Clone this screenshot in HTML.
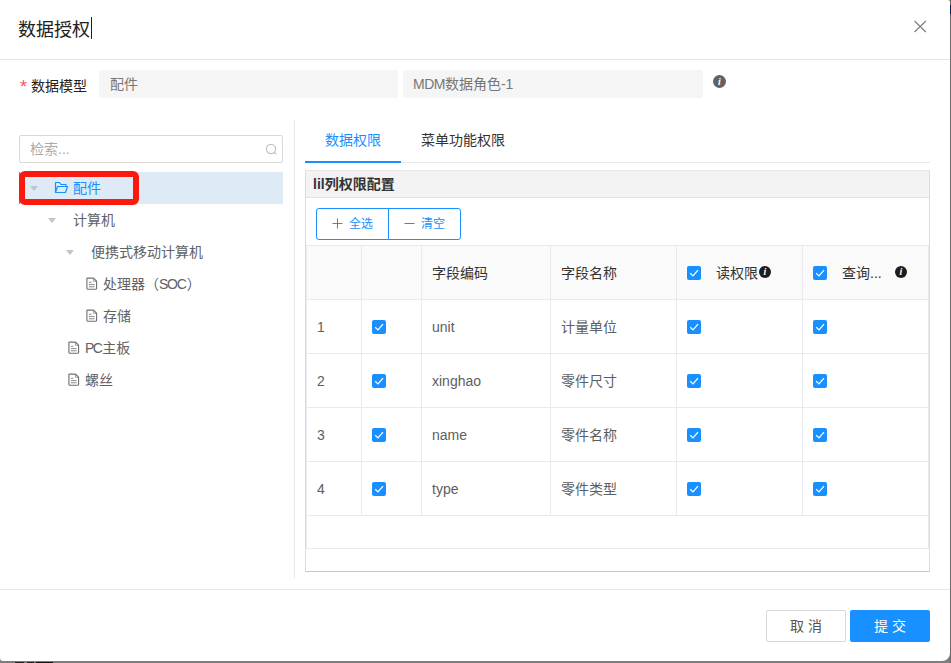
<!DOCTYPE html>
<html lang="zh-CN">
<head>
<meta charset="utf-8">
<title>数据授权</title>
<style>
*{box-sizing:border-box;margin:0;padding:0}
html,body{width:951px;height:663px;overflow:hidden}
body{background:#7d7d7d;font-family:"Liberation Sans","Noto Sans CJK SC",sans-serif;font-size:14px;color:#555;position:relative}
.abs{position:absolute}
.modal{position:absolute;left:0;top:0;width:950px;height:661px;background:#fff;border-radius:0 2px 8px 3px;overflow:hidden}
.edge-r{position:absolute;left:950px;top:0;width:1px;height:663px;background:#6a6a6a}
.edge-r i{position:absolute;left:0;top:5px;width:1px;height:9px;background:#00205f}
.title{left:18px;top:17px;font-size:18px;line-height:26px;color:#222}
.caret{left:91px;top:17px;width:1px;height:22px;background:#222}
.hline{left:0;top:59px;width:950px;height:1px;background:#e6e6e6}
.close{left:912px;top:19px;width:16px;height:16px}
.lbl{left:19px;top:75px;line-height:22px;color:#222;font-size:14px;white-space:nowrap}
.lbl b{color:#f5222d;font-weight:400;font-family:"Liberation Sans",sans-serif;font-size:18px;line-height:22px;vertical-align:-2px;margin-left:1px;margin-right:4px;color:#f5575a}
.inp{top:70px;height:28px;background:#f5f5f5;border-radius:2px;line-height:28px;padding-left:11px;color:#777;font-size:14px;white-space:nowrap}
.info{width:12px;height:12px;border-radius:50%;background:#1c1c1c;color:#fff;font:italic bold 10px/12px "Liberation Serif",serif;text-align:center}
.search{left:19px;top:135px;width:264px;height:28px;border:1px solid #d9d9d9;border-radius:2px;line-height:27px;padding-left:10px;color:#aaa;font-size:14px}
.sel{left:19px;top:172px;width:264px;height:32px;background:#deeaf6;border-left:1px solid #3a8ee6}
.red{left:19px;top:171px;width:120px;height:34px;border:6px solid #fb1a0e;border-radius:6px}
.tn{line-height:32px;height:32px;font-size:14px;color:#606266;white-space:nowrap}
.tri{width:0;height:0;border-left:4px solid transparent;border-right:4px solid transparent;border-top:5px solid #c0c4cc}
.vline{left:294px;top:120px;width:1px;height:459px;background:#e6e8ee}
.tab{top:129px;line-height:22px;font-size:14px;color:#333;white-space:nowrap}
.tabline{left:305px;top:162px;width:625px;height:1px;background:#e8e8f0}
.tabink{left:305px;top:161px;width:96px;height:2px;background:#1890ff}
.panel{left:305px;top:170px;width:625px;height:402px;border:1px solid #dcdcdc;border-top-color:#e6e6e6;border-bottom-color:#c6c6c6;background:#fff}
.phead{left:306px;top:171px;width:623px;height:27px;background:#f3f3f3;border-bottom:1px solid #e4e4e4}
.ptitle{left:313px;top:173px;line-height:22px;font-weight:700;color:#333;font-size:14px;white-space:nowrap}
.bi{display:inline-block;vertical-align:-1px;margin-right:6px}
.btn{top:208px;height:32px;border:1px solid #1890ff;color:#1890ff;line-height:30px;font-size:12px;text-align:center;background:#fff;white-space:nowrap}
.thead{left:306px;top:245px;width:623px;height:54px;background:#fafafa}
.hl{left:306px;width:623px;height:1px;background:#e8eaf0}
.vl{top:245px;width:1px;height:270px;background:#e8eaf0}
.cell{line-height:22px;font-size:14px;color:#5c5e62;white-space:nowrap}
.cb{width:14px;height:14px;border-radius:2px;background:#1890ff}
.cb svg{display:block}
.fline{left:0;top:589px;width:950px;height:1px;background:#e6e8f0}
.fbtn{top:610px;height:32px;line-height:30px;text-align:center;font-size:14px;border-radius:2px;white-space:nowrap}
</style>
</head>
<body>
<div class="modal">
  <div class="abs title">数据授权</div>
  <div class="abs caret"></div>
  <svg class="abs close" viewBox="0 0 16 16"><path d="M2.5 2 L13.9 13 M13.9 2 L2.5 13" stroke="#80808a" stroke-width="1.25" fill="none"/></svg>
  <div class="abs hline"></div>

  <div class="abs lbl"><b>*</b>数据模型</div>
  <div class="abs inp" style="left:99px;width:299px">配件</div>
  <div class="abs inp" style="left:403px;width:300px;padding-left:10px"><span style="letter-spacing:-.5px">MDM</span>数据角色-1</div>
  <div class="abs info" style="left:713px;top:75px;width:13px;height:13px;line-height:13px;background:#606266">i</div>

  <div class="abs search">检索...</div>
  <svg class="abs" style="left:265px;top:143px" width="13" height="13" viewBox="0 0 13 13"><circle cx="6" cy="6" r="4.6" stroke="#bfc3cc" stroke-width="1.3" fill="none"/><path d="M9.3 9.3 L11.3 11.3" stroke="#bfc3cc" stroke-width="1.3"/></svg>

  <div class="abs sel"></div>
  <div class="abs red"></div>
  <div class="abs tri" style="left:30px;top:186px"></div>
  <svg class="abs" style="left:54px;top:181px" width="15" height="13" viewBox="0 0 15 13"><path d="M1.5 11.5 V1.5 H5.5 L7 3.5 H12 V5.5 M1.5 11.5 L3.5 5.5 H13.5 L11.5 11.5 Z" stroke="#1890ff" stroke-width="1.2" fill="none" stroke-linejoin="round"/></svg>
  <div class="abs tn" style="left:73px;top:172px;color:#1890ff">配件</div>

  <div class="abs tri" style="left:48px;top:218px"></div>
  <div class="abs tn" style="left:73px;top:204px">计算机</div>

  <div class="abs tri" style="left:66px;top:250px"></div>
  <div class="abs tn" style="left:91px;top:236px">便携式移动计算机</div>

  <svg class="abs doc" style="left:86px;top:277px" width="12" height="14" viewBox="0 0 12 14"><path d="M1.5 1.1 H7.4 L10.6 4.3 V11.6 Q10.6 12.2 10 12.2 H1.5 Q.9 12.2 .9 11.6 V1.7 Q.9 1.1 1.5 1.1 Z" stroke="#6b6d72" stroke-width="1.1" fill="none"/><path d="M7.4 1.3 V4.3 H10.4" stroke="#8a8c90" stroke-width=".8" fill="none"/><path d="M2.9 5.3 H5.4 M2.9 7.6 H8.6 M2.9 9.8 H8.6" stroke="#7a7c80" stroke-width=".9" fill="none"/></svg>
  <div class="abs tn" style="left:103px;top:268px">处理器（<span style="letter-spacing:-1.3px;margin-right:1.3px">SOC</span>）</div>

  <svg class="abs doc" style="left:86px;top:309px" width="12" height="14" viewBox="0 0 12 14"><path d="M1.5 1.1 H7.4 L10.6 4.3 V11.6 Q10.6 12.2 10 12.2 H1.5 Q.9 12.2 .9 11.6 V1.7 Q.9 1.1 1.5 1.1 Z" stroke="#6b6d72" stroke-width="1.1" fill="none"/><path d="M7.4 1.3 V4.3 H10.4" stroke="#8a8c90" stroke-width=".8" fill="none"/><path d="M2.9 5.3 H5.4 M2.9 7.6 H8.6 M2.9 9.8 H8.6" stroke="#7a7c80" stroke-width=".9" fill="none"/></svg>
  <div class="abs tn" style="left:103px;top:300px">存储</div>

  <svg class="abs doc" style="left:68px;top:341px" width="12" height="14" viewBox="0 0 12 14"><path d="M1.5 1.1 H7.4 L10.6 4.3 V11.6 Q10.6 12.2 10 12.2 H1.5 Q.9 12.2 .9 11.6 V1.7 Q.9 1.1 1.5 1.1 Z" stroke="#6b6d72" stroke-width="1.1" fill="none"/><path d="M7.4 1.3 V4.3 H10.4" stroke="#8a8c90" stroke-width=".8" fill="none"/><path d="M2.9 5.3 H5.4 M2.9 7.6 H8.6 M2.9 9.8 H8.6" stroke="#7a7c80" stroke-width=".9" fill="none"/></svg>
  <div class="abs tn" style="left:85px;top:332px"><span style="letter-spacing:-1.7px;margin-right:1.2px">PC</span>主板</div>

  <svg class="abs doc" style="left:68px;top:373px" width="12" height="14" viewBox="0 0 12 14"><path d="M1.5 1.1 H7.4 L10.6 4.3 V11.6 Q10.6 12.2 10 12.2 H1.5 Q.9 12.2 .9 11.6 V1.7 Q.9 1.1 1.5 1.1 Z" stroke="#6b6d72" stroke-width="1.1" fill="none"/><path d="M7.4 1.3 V4.3 H10.4" stroke="#8a8c90" stroke-width=".8" fill="none"/><path d="M2.9 5.3 H5.4 M2.9 7.6 H8.6 M2.9 9.8 H8.6" stroke="#7a7c80" stroke-width=".9" fill="none"/></svg>
  <div class="abs tn" style="left:85px;top:364px">螺丝</div>

  <div class="abs vline"></div>

  <div class="abs tab" style="left:325px;color:#1890ff">数据权限</div>
  <div class="abs tab" style="left:421px">菜单功能权限</div>
  <div class="abs tabline"></div>
  <div class="abs tabink"></div>

  <div class="abs panel"></div>
  <div class="abs phead"></div>
  <div class="abs ptitle">lil列权限配置</div>

  <div class="abs btn" style="left:316px;width:73px;border-radius:3px 0 0 3px"><svg class="bi" width="11" height="11" viewBox="0 0 11 11"><path d="M5.5 .5 V10.5 M.5 5.5 H10.5" stroke="#1890ff" stroke-width="1" fill="none"/></svg>全选</div>
  <div class="abs btn" style="left:388px;width:73px;border-radius:0 3px 3px 0"><svg class="bi" width="11" height="11" viewBox="0 0 11 11"><path d="M.5 5.5 H10.5" stroke="#1890ff" stroke-width="1" fill="none"/></svg>清空</div>

  <div class="abs thead"></div>
  <div class="abs hl" style="top:245px"></div>
  <div class="abs hl" style="top:299px"></div>
  <div class="abs hl" style="top:353px"></div>
  <div class="abs hl" style="top:407px"></div>
  <div class="abs hl" style="top:461px"></div>
  <div class="abs hl" style="top:515px"></div>
  <div class="abs hl" style="top:548px"></div>
  <div class="abs vl" style="left:306px;height:303px"></div>
  <div class="abs vl" style="left:928px;height:303px"></div>
  <div class="abs vl" style="left:361px"></div>
  <div class="abs vl" style="left:421px"></div>
  <div class="abs vl" style="left:550px"></div>
  <div class="abs vl" style="left:676px"></div>
  <div class="abs vl" style="left:802px"></div>

  <div class="abs cell" style="left:432px;top:262px;color:#333">字段编码</div>
  <div class="abs cell" style="left:561px;top:262px;color:#333">字段名称</div>
  <div class="abs cb" style="left:687px;top:266px"><svg width="14" height="14" viewBox="0 0 14 14"><path d="M3.2 7.2 L6 9.9 L11 4.1" stroke="#fff" stroke-width="1.25" fill="none"/></svg></div>
  <div class="abs cell" style="left:716px;top:262px;color:#333">读权限</div>
  <div class="abs info" style="left:759px;top:266px">i</div>
  <div class="abs cb" style="left:813px;top:266px"><svg width="14" height="14" viewBox="0 0 14 14"><path d="M3.2 7.2 L6 9.9 L11 4.1" stroke="#fff" stroke-width="1.25" fill="none"/></svg></div>
  <div class="abs cell" style="left:842px;top:262px;color:#333">查询...</div>
  <div class="abs info" style="left:895px;top:266px">i</div>

  <!-- rows -->
  <div class="abs cell" style="left:317px;top:316px">1</div>
  <div class="abs cb" style="left:372px;top:320px"><svg width="14" height="14" viewBox="0 0 14 14"><path d="M3.2 7.2 L6 9.9 L11 4.1" stroke="#fff" stroke-width="1.25" fill="none"/></svg></div>
  <div class="abs cell" style="left:432px;top:316px">unit</div>
  <div class="abs cell" style="left:561px;top:316px">计量单位</div>
  <div class="abs cb" style="left:687px;top:320px"><svg width="14" height="14" viewBox="0 0 14 14"><path d="M3.2 7.2 L6 9.9 L11 4.1" stroke="#fff" stroke-width="1.25" fill="none"/></svg></div>
  <div class="abs cb" style="left:813px;top:320px"><svg width="14" height="14" viewBox="0 0 14 14"><path d="M3.2 7.2 L6 9.9 L11 4.1" stroke="#fff" stroke-width="1.25" fill="none"/></svg></div>

  <div class="abs cell" style="left:317px;top:370px">2</div>
  <div class="abs cb" style="left:372px;top:374px"><svg width="14" height="14" viewBox="0 0 14 14"><path d="M3.2 7.2 L6 9.9 L11 4.1" stroke="#fff" stroke-width="1.25" fill="none"/></svg></div>
  <div class="abs cell" style="left:432px;top:370px">xinghao</div>
  <div class="abs cell" style="left:561px;top:370px">零件尺寸</div>
  <div class="abs cb" style="left:687px;top:374px"><svg width="14" height="14" viewBox="0 0 14 14"><path d="M3.2 7.2 L6 9.9 L11 4.1" stroke="#fff" stroke-width="1.25" fill="none"/></svg></div>
  <div class="abs cb" style="left:813px;top:374px"><svg width="14" height="14" viewBox="0 0 14 14"><path d="M3.2 7.2 L6 9.9 L11 4.1" stroke="#fff" stroke-width="1.25" fill="none"/></svg></div>

  <div class="abs cell" style="left:317px;top:424px">3</div>
  <div class="abs cb" style="left:372px;top:428px"><svg width="14" height="14" viewBox="0 0 14 14"><path d="M3.2 7.2 L6 9.9 L11 4.1" stroke="#fff" stroke-width="1.25" fill="none"/></svg></div>
  <div class="abs cell" style="left:432px;top:424px">name</div>
  <div class="abs cell" style="left:561px;top:424px">零件名称</div>
  <div class="abs cb" style="left:687px;top:428px"><svg width="14" height="14" viewBox="0 0 14 14"><path d="M3.2 7.2 L6 9.9 L11 4.1" stroke="#fff" stroke-width="1.25" fill="none"/></svg></div>
  <div class="abs cb" style="left:813px;top:428px"><svg width="14" height="14" viewBox="0 0 14 14"><path d="M3.2 7.2 L6 9.9 L11 4.1" stroke="#fff" stroke-width="1.25" fill="none"/></svg></div>

  <div class="abs cell" style="left:317px;top:478px">4</div>
  <div class="abs cb" style="left:372px;top:482px"><svg width="14" height="14" viewBox="0 0 14 14"><path d="M3.2 7.2 L6 9.9 L11 4.1" stroke="#fff" stroke-width="1.25" fill="none"/></svg></div>
  <div class="abs cell" style="left:432px;top:478px">type</div>
  <div class="abs cell" style="left:561px;top:478px">零件类型</div>
  <div class="abs cb" style="left:687px;top:482px"><svg width="14" height="14" viewBox="0 0 14 14"><path d="M3.2 7.2 L6 9.9 L11 4.1" stroke="#fff" stroke-width="1.25" fill="none"/></svg></div>
  <div class="abs cb" style="left:813px;top:482px"><svg width="14" height="14" viewBox="0 0 14 14"><path d="M3.2 7.2 L6 9.9 L11 4.1" stroke="#fff" stroke-width="1.25" fill="none"/></svg></div>

  <div class="abs fline"></div>
  <div class="abs fbtn" style="left:766px;width:80px;border:1px solid #d9d9d9;color:#555;background:#fff">取 消</div>
  <div class="abs fbtn" style="left:850px;width:80px;background:#1890ff;color:#fff;line-height:32px">提 交</div>
</div>
<div class="edge-r"><i></i></div>
<div class="abs" style="left:15px;top:662px;width:9px;height:1px;background:#222"></div><div class="abs" style="left:27px;top:662px;width:7px;height:1px;background:#222"></div><div class="abs" style="left:36px;top:662px;width:17px;height:1px;background:#111"></div>
</body>
</html>
